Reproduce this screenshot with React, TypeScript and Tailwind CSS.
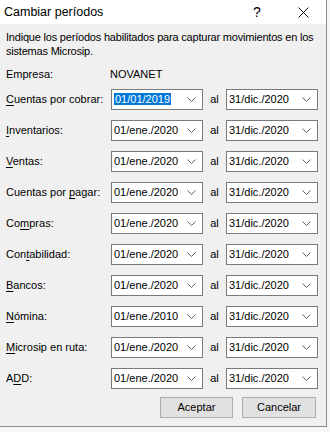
import React from 'react'

const FONT = { fontFamily: '"Segoe UI", "Liberation Sans", Arial, sans-serif' }

type Row = { label: string; key: number; from: string; to: string; selected?: boolean }

const ROWS: Row[] = [
  { label: 'Cuentas por cobrar:', key: 0, from: '01/01/2019', to: '31/dic./2020', selected: true },
  { label: 'Inventarios:', key: 0, from: '01/ene./2020', to: '31/dic./2020' },
  { label: 'Ventas:', key: 0, from: '01/ene./2020', to: '31/dic./2020' },
  { label: 'Cuentas por pagar:', key: 12, from: '01/ene./2020', to: '31/dic./2020' },
  { label: 'Compras:', key: 2, from: '01/ene./2020', to: '31/dic./2020' },
  { label: 'Contabilidad:', key: 3, from: '01/ene./2020', to: '31/dic./2020' },
  { label: 'Bancos:', key: 0, from: '01/ene./2020', to: '31/dic./2020' },
  { label: 'Nómina:', key: 0, from: '01/ene./2010', to: '31/dic./2020' },
  { label: 'Microsip en ruta:', key: 0, from: '01/ene./2020', to: '31/dic./2020' },
  { label: 'ADD:', key: 1, from: '01/ene./2020', to: '31/dic./2020' },
]

function Chevron() {
  return (
    <svg width="9" height="6" viewBox="0 0 9 6" className="shrink-0">
      <path d="M0.5 0.5 L4.5 4.5 L8.5 0.5" fill="none" stroke="#606060" strokeWidth="1" />
    </svg>
  )
}

function Combo({ value, selected }: { value: string; selected?: boolean }) {
  return (
    <div className="flex h-[21px] w-[92px] shrink-0 items-center border border-[#7a7a7a] bg-white pl-[2px] pr-[6px]">
      <span className="flex-1 whitespace-nowrap text-[11px] leading-[15px] text-black">
        {selected ? (
          <span className="bg-[#0078d7] px-[1px] text-white">{value}</span>
        ) : (
          value
        )}
      </span>
      <Chevron />
    </div>
  )
}

function Label({ text, k }: { text: string; k: number }) {
  return (
    <span className="w-[105px] shrink-0 whitespace-nowrap text-[11px] text-black">
      {text.slice(0, k)}
      <span className="underline underline-offset-2">{text[k]}</span>
      {text.slice(k + 1)}
    </span>
  )
}

export default function App() {
  return (
    <div className="h-[432px] w-[330px] bg-[#f7f7f7]" style={FONT}>
      <div className="flex h-[427px] w-[327px] flex-col border-b border-r border-[#8a8a8a] bg-[#f0f0f0]">
        {/* barra de título */}
        <div className="flex h-[24px] shrink-0 items-center bg-white pl-[4px]">
          <span className="flex-1 text-[12.5px] text-black">Cambiar períodos</span>
          <span className="w-[46px] text-center text-[14px] text-black">?</span>
          <span className="flex w-[46px] items-center justify-center">
            <svg width="11" height="11" viewBox="0 0 11 11">
              <path d="M0.5 0.5 L10.5 10.5 M10.5 0.5 L0.5 10.5" stroke="#111" strokeWidth="1" />
            </svg>
          </span>
        </div>

        <div className="flex flex-col px-[6px] pt-[6px]">
          <p className="w-[318px] text-[11px] leading-[14px] tracking-[-0.2px] text-black">
            Indique los períodos habilitados para capturar movimientos en los sistemas Microsip.
          </p>
          <div className="mt-[8px] flex h-[16px] items-center text-[11px]">
            <span className="w-[104px]">Empresa:</span>
            <span>NOVANET</span>
          </div>

          <div className="mt-[7px] flex flex-col gap-[10px]">
            {ROWS.map((r, i) => (
              <div key={i} className="flex items-center">
                <Label text={r.label} k={r.key} />
                <Combo value={r.from} selected={r.selected} />
                <span className="w-[23px] shrink-0 text-center text-[11px]">al</span>
                <Combo value={r.to} />
              </div>
            ))}
          </div>

          <div className="mt-[8px] flex justify-end gap-[9px] pr-[4px]">
            <button className="h-[21px] w-[73px] border border-[#adadad] bg-[#e1e1e1] text-[11px] text-black">
              Aceptar
            </button>
            <button className="h-[21px] w-[74px] border border-[#adadad] bg-[#e1e1e1] text-[11px] text-black">
              Cancelar
            </button>
          </div>
        </div>
      </div>
    </div>
  )
}
